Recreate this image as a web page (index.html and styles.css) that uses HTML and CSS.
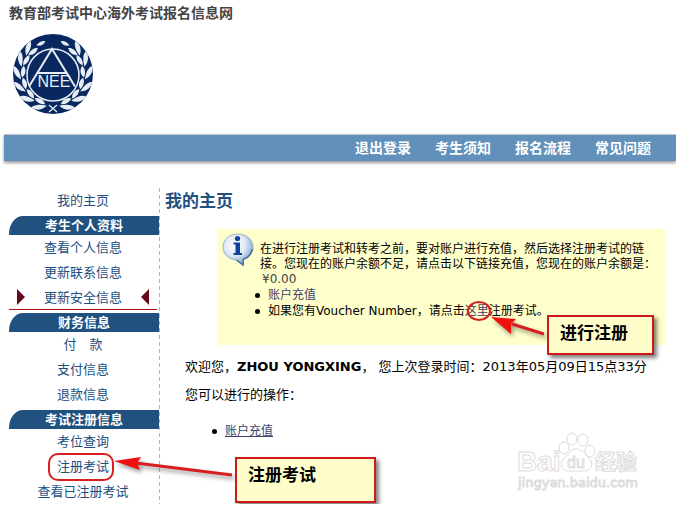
FILE: index.html
```html
<!DOCTYPE html>
<html lang="zh-CN">
<head>
<meta charset="utf-8">
<title>教育部考试中心海外考试报名信息网</title>
<link rel="stylesheet" href="styles.css">
</head>
<body>
<div class="page">
  <header class="top">
    <p class="site-name">教育部考试中心海外考试报名信息网</p>
    <svg class="logo" viewBox="-40 -40 80 80" role="img" aria-label="NEEA">
      <defs>
        <g id="pair">
          <path d="M5 32Q0 41-9 39Q-6 33 5 32ZM3 31Q-2 25-9 29Q-4 34 3 31Z"/>
        </g>
        <g id="branch">
          <use href="#pair" transform="rotate(20)"/>
          <use href="#pair" transform="rotate(43)"/>
          <use href="#pair" transform="rotate(66)"/>
          <use href="#pair" transform="rotate(89)"/>
          <use href="#pair" transform="rotate(112)"/>
          <use href="#pair" transform="rotate(133)"/>
          <path d="M3 33Q-2 29-7 33Q-3 36 3 33Z" transform="rotate(155)"/>
        </g>
      </defs>
      <circle r="40" fill="#08285f"/>
      <g fill="#e6edf6">
        <use href="#branch"/>
        <use href="#branch" transform="scale(-1 1)"/>
      </g>
      <circle cy="1" r="26" fill="#08285f" stroke="#e6edf6" stroke-width="1.5"/>
      <g fill="none" stroke="#e6edf6">
        <path d="M-24 12.500L-1-25L22 12.500M-15-1H13" stroke-width="2"/>
        <path d="M4 31L-4 38M-4 31L4 38" stroke-width="1.3"/>
      </g>
      <text class="logo-text" x="1" y="13" text-anchor="middle">NEE</text>
    </svg>
  </header>

  <nav class="bar">
    <a href="#">退出登录</a>
    <a href="#">考生须知</a>
    <a href="#">报名流程</a>
    <a href="#">常见问题</a>
  </nav>

  <div class="columns">
    <aside class="side">
      <ul>
        <li><a href="#">我的主页</a></li>
      </ul>
      <h2>考生个人资料</h2>
      <ul>
        <li><a href="#">查看个人信息</a></li>
        <li><a href="#">更新联系信息</a></li>
        <li class="current"><a href="#">更新安全信息</a></li>
      </ul>
      <h2>财务信息</h2>
      <ul>
        <li><a href="#">付　款</a></li>
        <li><a href="#">支付信息</a></li>
        <li><a href="#">退款信息</a></li>
      </ul>
      <h2>考试注册信息</h2>
      <ul>
        <li><a href="#">考位查询</a></li>
        <li><a href="#">注册考试</a></li>
        <li><a href="#">查看已注册考试</a></li>
      </ul>
    </aside>

    <main class="main">
      <h1>我的主页</h1>
      <section class="notice">
        <svg class="info" viewBox="0 0 32 34" aria-hidden="true">
          <defs>
            <radialGradient id="bubble" cx=".4" cy=".35" r=".7">
              <stop offset="0" stop-color="#fff"/>
              <stop offset=".5" stop-color="#dfe9f5"/>
              <stop offset="1" stop-color="#6f98cc"/>
            </radialGradient>
          </defs>
          <path d="M16 1C24.500 1 31 6.500 31 14C31 20 27 24.500 21.500 26L21 32L14.500 27C6.500 26.500 1 21 1 14C1 6.500 7.500 1 16 1Z" fill="url(#bubble)" stroke="#9db3cf"/>
          <path d="M30.500 16C29 22 26 25 21.500 26L21 32L14.500 27" fill="none" stroke="#4d6f9c" stroke-width="1.5"/>
          <circle cx="15.500" cy="5.500" r="2.600" fill="#12409c"/>
          <path d="M11.500 9.500H18V20H20V22H11.500V20H13.500V11.500H11.500Z" fill="#12409c"/>
        </svg>
        <div class="notice-body">
          <p>在进行注册考试和转考之前，要对账户进行充值，然后选择注册考试的链<br>接。您现在的账户余额不足，请点击以下链接充值，您现在的账户余额是：<br><span class="money">¥0.00</span></p>
          <ul>
            <li><a href="#">账户充值</a></li>
            <li>如果您有Voucher Number，请点击<a href="#">这里</a>注册考试。</li>
          </ul>
        </div>
      </section>
      <p class="line">欢迎您，<strong>ZHOU YONGXING</strong>， 您上次登录时间：2013年05月09日15点33分</p>
      <p class="line">您可以进行的操作：</p>
      <ul class="actions">
        <li><a href="#">账户充值</a></li>
      </ul>
    </main>
  </div>

  <svg class="marks" width="676" height="506" viewBox="0 0 676 506" aria-hidden="true">
    <g class="ink">
      <path d="M544 334L512 324" stroke="#d81e1e" stroke-width="3"/>
      <path d="M491 317L516 319L511 324L511 334Z" fill="#f01010"/>
      <path d="M232 475L136 463" stroke="#d81e1e" stroke-width="3"/>
      <path d="M114 461L141 457L137 463L140 470Z" fill="#f01010"/>
    </g>
    <ellipse cx="479" cy="311" rx="11" ry="9" fill="none" stroke="#d81e1e" stroke-width="2"/>
    <rect x="49" y="454" width="64" height="26" rx="9" fill="none" stroke="#d81e1e" stroke-width="2"/>
    <g class="watermark">
      <text class="wm-big" x="517" y="471">Bai</text>
      <path d="M576 449C583 449 585 455 589 458C594 463 592 471 584 471H569C561 471 559 463 564 458C569 455 570 449 576 449Z"/>
      <ellipse cx="564" cy="448" rx="5" ry="6"/>
      <ellipse cx="572" cy="439" rx="5" ry="6"/>
      <ellipse cx="583" cy="440" rx="5" ry="6"/>
      <ellipse cx="590" cy="451" rx="5" ry="6"/>
      <text class="wm-du" x="567" y="468">du</text>
      <text class="wm-cn" x="595" y="469">经验</text>
      <text class="wm-url" x="518" y="487">jingyan.baidu.com</text>
    </g>
  </svg>
  <div class="callout callout-enter">进行注册</div>
  <div class="callout callout-exam">注册考试</div>
</div>
</body>
</html>
```
FILE: styles.css
```css
* { box-sizing: border-box; }

body {
  margin: 0;
  background: #fff;
  color: #000;
  font: 13px/20px "DejaVu Sans", "Noto Sans CJK SC", sans-serif;
}

h1, h2, p, ul { margin: 0; padding: 0; }
a { color: #41416b; text-decoration: none; }

.page { position: relative; overflow: hidden; }

.top { padding: 3px 9px 0; }
.site-name { color: #444; font-size: 14px; font-weight: 700; }
.logo { display: block; width: 80px; height: 80px; margin: 11px 4px 20px; }
.logo-text { fill: #e6edf6; font: 16px "Liberation Sans", sans-serif; }

.bar {
  display: flex;
  justify-content: flex-end;
  gap: 24px;
  margin-left: 4px;
  padding-right: 25px;
  border-top: 1px solid #c4c8cc;
  background: #6191ba;
  box-shadow: 0 2px 3px #999;
  font-size: 14px;
  font-weight: 700;
  line-height: 26px;
}
.bar a { color: #fff; }

.columns { display: flex; padding: 27px 11px 0 9px; }

.side {
  flex: none;
  width: 151px;
  background: repeating-linear-gradient(#b4b4b4 0 4px, transparent 4px 7px) right / 1px 100% no-repeat;
  padding-right: 1px;
  text-align: center;
}
.side ul { list-style: none; }
.side li { height: 25px; padding-right: 2px; line-height: 25px; }
.side a { color: #1b4f82; }
.side h2 {
  margin-top: 3px;
  border-top-left-radius: 14px 18px;
  background: #20517f;
  color: #fff;
  font-size: 13px;
  line-height: 19px;
}
.side .current {
  display: flex;
  align-items: center;
  justify-content: space-between;
  margin-right: 2px;
  padding: 0 8px;
  border-bottom: 1px solid #b01818;
}
.current::before, .current::after {
  content: "";
  border: solid transparent;
  border-width: 8px 0;
}
.current::before { border-left: 8px solid #650a1c; }
.current::after { border-right: 8px solid #650a1c; }

.main { flex: 1; padding-left: 5px; }
.main h1 { color: #20517f; font-size: 17px; line-height: 26px; }

.notice {
  display: flex;
  gap: 6px;
  min-height: 116px;
  margin: 15px 0 12px 52px;
  padding: 4px 0 0 5px;
  background: #ffffcb;
  font-size: 12px;
}
.info { flex: none; width: 32px; height: 34px; }
.notice-body { flex: 1; padding-top: 9px; line-height: 15px; white-space: nowrap; }
.notice-body ul { padding-left: 8px; line-height: 16px; }
.notice-body li { list-style: none; position: relative; }
.notice-body li::before, .actions li::before {
  content: "";
  position: absolute;
  left: -13px;
  top: 6px;
  width: 5px;
  height: 5px;
  border-radius: 50%;
  background: #000;
}
.money { padding-left: 2px; color: #444; }

.line { padding-left: 20px; margin-bottom: 8px; white-space: nowrap; }
.actions { margin-top: 18px; padding-left: 60px; list-style: none; font-size: 12px; line-height: 16px; }
.actions li { position: relative; }
.actions a { text-decoration: underline; }

.marks { position: absolute; left: 0; top: 0; pointer-events: none; }
.ink { filter: drop-shadow(2px 3px 2px rgba(0, 0, 0, .4)); }
.watermark { fill: #fff; stroke: #dcdcdc; stroke-width: 1px; }
.wm-big { font: 700 28px "Liberation Sans", sans-serif; }
.wm-du { font: 16px "Liberation Sans", sans-serif; }
.wm-cn { font: 700 21px "Noto Sans CJK SC", sans-serif; }
.wm-url { font: 13px "DejaVu Sans", sans-serif; }

.callout {
  position: absolute;
  padding: 0 11px;
  border: 2px solid #cc1a1a;
  background: #fffdc9;
  box-shadow: 3px 3px 4px rgba(0, 0, 0, .5);
  font-size: 17px;
  font-weight: 700;
  line-height: 32px;
}
.callout-enter { left: 547px; top: 315px; width: 107px; height: 40px; }
.callout-exam { left: 235px; top: 457px; width: 141px; height: 46px; }
```
